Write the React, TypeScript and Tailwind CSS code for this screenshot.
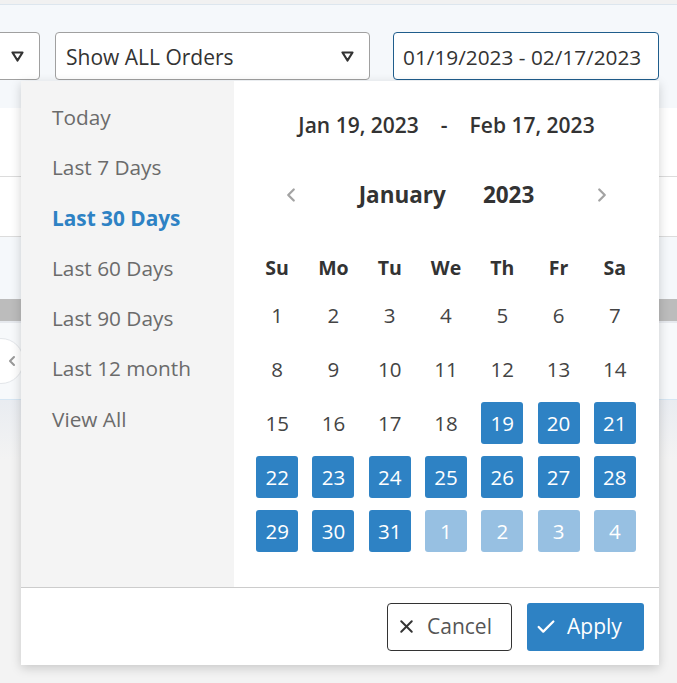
import * as React from "react";
import { X, Check, ChevronLeft, ChevronRight } from "lucide-react";

const presets = [
  "Today",
  "Last 7 Days",
  "Last 30 Days",
  "Last 60 Days",
  "Last 90 Days",
  "Last 12 month",
  "View All",
];

const weekdays = ["Su", "Mo", "Tu", "We", "Th", "Fr", "Sa"];

type Day = { n: number; state: "none" | "sel" | "next" };

function buildDays(): Day[] {
  const days: Day[] = [];
  for (let i = 1; i <= 31; i++) {
    days.push({ n: i, state: i >= 19 ? "sel" : "none" });
  }
  for (let i = 1; i <= 4; i++) days.push({ n: i, state: "next" });
  return days;
}

function Caret() {
  return (
    <svg width="13" height="11" viewBox="0 0 13 11" fill="none">
      <path
        d="M1.5 1.5 H11.5 L6.5 9.5 Z"
        stroke="#333"
        strokeWidth="2.2"
        strokeLinejoin="round"
      />
    </svg>
  );
}

export default function App() {
  const days = buildDays();

  return (
    <div className="relative w-[677px] h-[683px] overflow-hidden bg-[#f3f3f3] font-['Open_Sans',sans-serif] text-[#333]">
      {/* page behind the popup */}
      <div className="h-[5px] bg-[#f1f1f1] border-b border-[#dde6ee]" />
      <div className="h-[103px] bg-[#f5f8fb] flex items-start pt-[27px]">
        <div className="-ml-[40px] w-[80px] h-[48px] bg-white border border-[#a0a0a0] rounded-[4px] flex items-center justify-end pr-[15px]">
          <Caret />
        </div>
        <div className="ml-[15px] w-[315px] h-[48px] bg-white border border-[#a0a0a0] rounded-[4px] flex items-center justify-between pl-[10px] pr-[15px]">
          <span className="text-[21px] pt-[3px]">Show ALL Orders</span>
          <Caret />
        </div>
        <div className="ml-[23px] w-[266px] h-[48px] bg-white border border-[#1f5d8c] rounded-[4px] flex items-center pl-[9px]">
          <span className="text-[20.8px] pt-[3px]">01/19/2023 - 02/17/2023</span>
        </div>
      </div>
      <div className="h-[69px] bg-white border-b border-[#dcdcdc]" />
      <div className="h-[60px] bg-white border-b border-[#dcdcdc]" />
      <div className="h-[62px] bg-[#f5f8fb]" />
      <div className="h-[22px] bg-[#bcbcbc]" />
      <div className="h-[78px] bg-[#f7f9fb] border-t-2 border-[#e6e9ee] flex items-center">
        <div className="-ml-[22px] w-[46px] h-[46px] rounded-full bg-white border border-[#e3e6ea] flex items-center justify-end pr-[3px] text-[#999]">
          <ChevronLeft size={16} strokeWidth={3} />
        </div>
      </div>
      <div className="h-[60px] border-t border-[#d6e6f3] bg-gradient-to-b from-[#e9ecf1] to-[#f3f3f3]" />

      {/* date range popup */}
      <div className="absolute left-[21px] top-[81px] w-[638px] h-[584px] bg-white shadow-[0_3px_10px_rgba(0,0,0,0.18)] flex flex-col">
        <div className="flex h-[506px]">
          <div className="w-[213px] bg-[#f4f4f4] pt-[11px] pl-[31px]">
            {presets.map((p) => (
              <div
                key={p}
                className={
                  p === "Last 30 Days"
                    ? "h-[50.3px] leading-[50px] text-[20.8px] font-bold text-[#2e82c4]"
                    : "h-[50.3px] leading-[50px] text-[20.8px] text-[#6b6b6b]"
                }
              >
                {p}
              </div>
            ))}
          </div>

          <div className="flex-1 flex flex-col pt-[30px]">
            <div className="h-[30px] flex items-center justify-center gap-[22px] text-[21px] font-semibold text-[#333]">
              <span>Jan 19, 2023</span>
              <span>-</span>
              <span>Feb 17, 2023</span>
            </div>

            <div className="mt-[39px] h-[30px] flex items-center justify-between px-[46px]">
              <ChevronLeft size={22} strokeWidth={2.5} className="text-[#a3a3a3]" />
              <div className="flex items-center gap-[37px] text-[22.5px] font-bold text-[#333]">
                <span>January</span>
                <span>2023</span>
              </div>
              <ChevronRight size={22} strokeWidth={2.5} className="text-[#a3a3a3]" />
            </div>

            <div className="mt-[43px] h-[30px] grid grid-cols-7 ml-[15px] mr-[16px] text-[19.5px] font-bold text-[#333]">
              {weekdays.map((w) => (
                <div key={w} className="flex items-center justify-center">
                  {w}
                </div>
              ))}
            </div>

            <div className="mt-[11px] grid grid-cols-7 gap-y-[12px] ml-[15px] mr-[16px]">
              {days.map((d, i) => (
                <div key={i} className="flex justify-center">
                  <div
                    className={
                      d.state === "sel"
                        ? "w-[42px] h-[42px] rounded-[3px] bg-[#2e82c4] text-white flex items-center justify-center text-[20.5px]"
                        : d.state === "next"
                        ? "w-[42px] h-[42px] rounded-[3px] bg-[#97c0e2] text-white flex items-center justify-center text-[20.5px]"
                        : "w-[42px] h-[42px] flex items-center justify-center text-[20.5px] text-[#444]"
                    }
                  >
                    {d.n}
                  </div>
                </div>
              ))}
            </div>
          </div>
        </div>

        <div className="flex-1 border-t border-[#cccccc] flex items-center justify-end gap-[15px] pr-[15px]">
          <button className="w-[125px] h-[48px] border border-[#333] rounded-[4px] bg-white flex items-center pl-[8px] gap-[10px] text-[21px] text-[#555]">
            <X size={21} strokeWidth={2.3} className="text-[#333]" />
            <span>Cancel</span>
          </button>
          <button className="w-[117px] h-[48px] rounded-[3px] bg-[#2e82c4] flex items-center pl-[8px] gap-[10px] text-[21px] text-white">
            <Check size={22} strokeWidth={2.5} />
            <span>Apply</span>
          </button>
        </div>
      </div>
    </div>
  );
}
